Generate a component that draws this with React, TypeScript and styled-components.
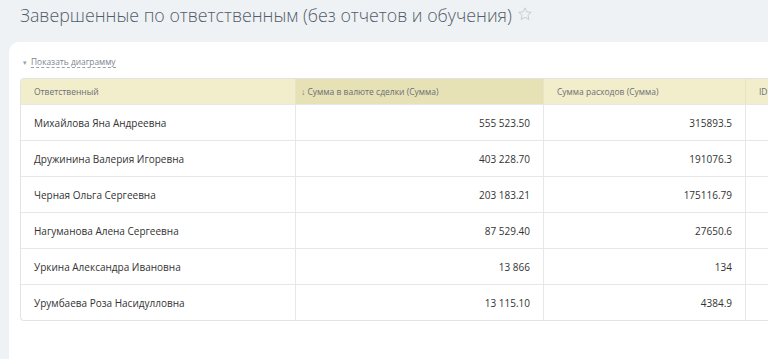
import React from 'react';
import styled, { createGlobalStyle } from 'styled-components';

const rows = [
    { name: 'Михайлова Яна Андреевна', sum: '555 523.50', cost: '315893.5' },
    { name: 'Дружинина Валерия Игоревна', sum: '403 228.70', cost: '191076.3' },
    { name: 'Черная Ольга Сергеевна', sum: '203 183.21', cost: '175116.79' },
    { name: 'Нагуманова Алена Сергеевна', sum: '87 529.40', cost: '27650.6' },
    { name: 'Уркина Александра Ивановна', sum: '13 866', cost: '134' },
    { name: 'Урумбаева Роза Насидулловна', sum: '13 115.10', cost: '4384.9' },
];

const App = () => {
    return (
        <Page>
            <GlobalStyle />
            <TitleRow>
                <Title>Завершенные по ответственным (без отчетов и обучения)</Title>
                <Star width="16" height="16" viewBox="0 0 24 24">
                    <path
                        d="M12 2.8l2.8 6 6.5.7-4.9 4.4 1.4 6.4L12 17l-5.8 3.3 1.4-6.4-4.9-4.4 6.5-.7z"
                        fill="none"
                        stroke="#c5c9ce"
                        strokeWidth="1.4"
                        strokeLinejoin="round"
                    />
                </Star>
            </TitleRow>
            <Card>
                <ChartToggle>
                    <Caret>▾</Caret>
                    <ToggleText>Показать диаграмму</ToggleText>
                </ChartToggle>
                <Table>
                    <HeadRow>
                        <HeadCell width={274}>Ответственный</HeadCell>
                        <HeadCell width={248} sorted>↓ Сумма в валюте сделки (Сумма)</HeadCell>
                        <HeadCell width={202}>Сумма расходов (Сумма)</HeadCell>
                        <HeadCell width={120}>ID</HeadCell>
                    </HeadRow>
                    {rows.map((r, i) => (
                        <Row key={i}>
                            <Cell width={274}>{r.name}</Cell>
                            <Cell width={248} right>{r.sum}</Cell>
                            <Cell width={202} right>{r.cost}</Cell>
                            <Cell width={120}></Cell>
                        </Row>
                    ))}
                </Table>
            </Card>
        </Page>
    );
};

export default App;

const GlobalStyle = createGlobalStyle`
    html, body {
        margin: 0;
        padding: 0;
        background: #eef2f4;
        overflow: hidden;
    }
    body {
        font-family: "Open Sans", "Liberation Sans", sans-serif;
    }
`;

const Page = styled.div`
    width: 768px;
    height: 359px;
    background: #eef2f4;
    overflow: hidden;
    display: flex;
    flex-direction: column;
`;

const TitleRow = styled.div`
    height: 42px;
    padding: 1px 0 0 20px;
    box-sizing: border-box;
    display: flex;
    align-items: flex-start;
    gap: 5px;
`;

const Title = styled.h1`
    margin: 0;
    font-size: 17.8px;
    line-height: 28px;
    font-weight: 300;
    color: #535c69;
    white-space: nowrap;
`;

const Star = styled.svg`
    margin-top: 5px;
`;

const Card = styled.div`
    margin-left: 9px;
    flex: 1;
    background: #fff;
    border-top-left-radius: 10px;
    padding: 13px 0 0 11px;
    box-sizing: border-box;
`;

const ChartToggle = styled.div`
    display: flex;
    align-items: center;
    gap: 4px;
    height: 14px;
    margin: 0 0 9px 3px;
    color: #80868e;
    font-size: 8.4px;
`;

const Caret = styled.span`
    font-size: 7px;
    color: #9aa0a6;
`;

const ToggleText = styled.span`
    border-bottom: 1px dashed #9aa0a6;
    line-height: 11px;
`;

const Table = styled.div`
    width: 860px;
    border: 1px solid #e3e3e3;
    border-right: none;
    border-radius: 4px 0 0 4px;
    overflow: hidden;
`;

const HeadRow = styled.div`
    display: flex;
    height: 25px;
    background: #f2eecc;
`;

const HeadCell = styled.div<{ width: number; sorted?: boolean }>`
    width: ${p => p.width}px;
    flex: none;
    box-sizing: border-box;
    padding: 0 ${p => (p.sorted ? 5 : 13)}px;
    display: flex;
    align-items: center;
    font-size: 8.5px;
    color: #6c6f72;
    white-space: nowrap;
    background: ${p => (p.sorted ? '#e7e1b6' : 'transparent')};
    & + & {
        border-left: 1px solid #e9e4c2;
    }
`;

const Row = styled.div`
    display: flex;
    height: 36px;
    box-sizing: border-box;
    border-top: 1px solid #e7e7e7;
`;

const Cell = styled.div<{ width: number; right?: boolean }>`
    width: ${p => p.width}px;
    flex: none;
    box-sizing: border-box;
    padding: 0 13px;
    display: flex;
    align-items: center;
    justify-content: ${p => (p.right ? 'flex-end' : 'flex-start')};
    font-size: 10px;
    color: #333;
    white-space: nowrap;
    & + & {
        border-left: 1px solid #e7e7e7;
    }
`;
